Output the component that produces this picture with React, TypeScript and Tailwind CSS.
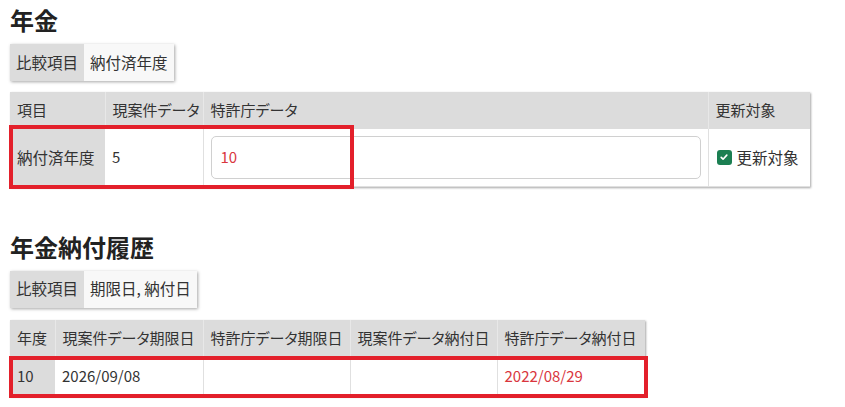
const font = {
  fontFamily: '"Noto Sans CJK JP", "Noto Sans", sans-serif',
  fontFeatureSettings: '"palt"',
}

function CompareBox({ label, value }: { label: string; value: string }) {
  return (
    <div className="inline-flex h-[37px] text-[15.5px] text-[#333] shadow-[1px_1px_3px_rgba(0,0,0,0.35)]">
      <div className="flex items-center px-[6px] bg-[#dcdcdc]">{label}</div>
      <div className="flex items-center px-[6px] bg-[#f8f8f8]">{value}</div>
    </div>
  )
}

function CheckIcon() {
  return (
    <span className="inline-flex items-center justify-center w-[15px] h-[15px] rounded-[3px] bg-[#1b7f52]">
      <svg className="w-[10px] h-[10px]" viewBox="0 0 16 16" fill="none" stroke="white" strokeWidth={2.6} strokeLinecap="round" strokeLinejoin="round">
        <path d="M3.5 8.5l3 3 6-6.5" />
      </svg>
    </span>
  )
}

export default function App() {
  const th = 'h-[37px] px-[7px] text-left font-normal bg-[#dcdcdc] border-r border-[#e8e8e8] last:border-r-0 whitespace-nowrap'
  const th2 = 'h-[38px] px-[7px] text-left font-normal bg-[#dcdcdc] border-r border-[#e8e8e8] last:border-r-0 whitespace-nowrap'

  return (
    <div className="min-h-[407px] bg-white pl-[10px] text-[#333]" style={font}>
      {/* 年金 */}
      <h2 className="h-[40px] flex items-center text-[24px] font-bold text-[#222]">年金</h2>
      <div className="mt-[4px]">
        <CompareBox label="比較項目" value="納付済年度" />
      </div>

      <div className="relative mt-[11px] w-[800px] shadow-[1px_1px_2px_rgba(0,0,0,0.35)]">
        <table className="w-full border-collapse text-[15px] table-fixed">
          <colgroup>
            <col className="w-[95px]" />
            <col className="w-[98px]" />
            <col className="w-[505px]" />
            <col className="w-[102px]" />
          </colgroup>
          <thead>
            <tr>
              <th className={th}>項目</th>
              <th className={th}>現案件データ</th>
              <th className={th}>特許庁データ</th>
              <th className={th}>更新対象</th>
            </tr>
          </thead>
          <tbody>
            <tr className="h-[57px]">
              <td className="px-[7px] bg-[#dcdcdc] whitespace-nowrap text-[15.5px]">納付済年度</td>
              <td className="px-[7px] border-r border-[#e0e0e0] border-b">5</td>
              <td className="px-[7px] border-r border-[#e0e0e0] border-b">
                <div className="h-[43px] flex items-center px-[9px] rounded-[5px] border border-[#d0d0d0] text-[#d9363e]">10</div>
              </td>
              <td className="px-[8px] border-b border-[#e0e0e0]">
                <div className="flex items-center gap-[5px] whitespace-nowrap text-[15.5px]">
                  <CheckIcon />
                  <span>更新対象</span>
                </div>
              </td>
            </tr>
          </tbody>
        </table>
        <div className="absolute left-[-1px] top-[33px] w-[345px] h-[64px] border-[4px] border-[#e3202b] pointer-events-none" />
      </div>

      {/* 年金納付履歴 */}
      <h2 className="mt-[40px] h-[40px] flex items-center text-[24px] font-bold text-[#222]">年金納付履歴</h2>
      <div className="mt-[4px]">
        <CompareBox label="比較項目" value="期限日, 納付日" />
      </div>

      <div className="relative mt-[12px] w-[635px] shadow-[1px_1px_2px_rgba(0,0,0,0.35)]">
        <table className="w-full border-collapse text-[15px] table-fixed">
          <colgroup>
            <col className="w-[45px]" />
            <col className="w-[148px]" />
            <col className="w-[147px]" />
            <col className="w-[147px]" />
            <col className="w-[148px]" />
          </colgroup>
          <thead>
            <tr>
              <th className={th2}>年度</th>
              <th className={th2}>現案件データ期限日</th>
              <th className={th2}>特許庁データ期限日</th>
              <th className={th2}>現案件データ納付日</th>
              <th className={th2}>特許庁データ納付日</th>
            </tr>
          </thead>
          <tbody>
            <tr className="h-[38px]">
              <td className="px-[7px] bg-[#dcdcdc]">10</td>
              <td className="px-[7px] border-r border-[#e0e0e0]">2026/09/08</td>
              <td className="px-[7px] border-r border-[#e0e0e0]"></td>
              <td className="px-[7px] border-r border-[#e0e0e0]"></td>
              <td className="px-[7px] text-[#d9363e]">2022/08/29</td>
            </tr>
          </tbody>
        </table>
        <div className="absolute left-[-1px] top-[36px] w-[639px] h-[42px] border-[4px] border-[#e3202b] pointer-events-none" />
      </div>
    </div>
  )
}
